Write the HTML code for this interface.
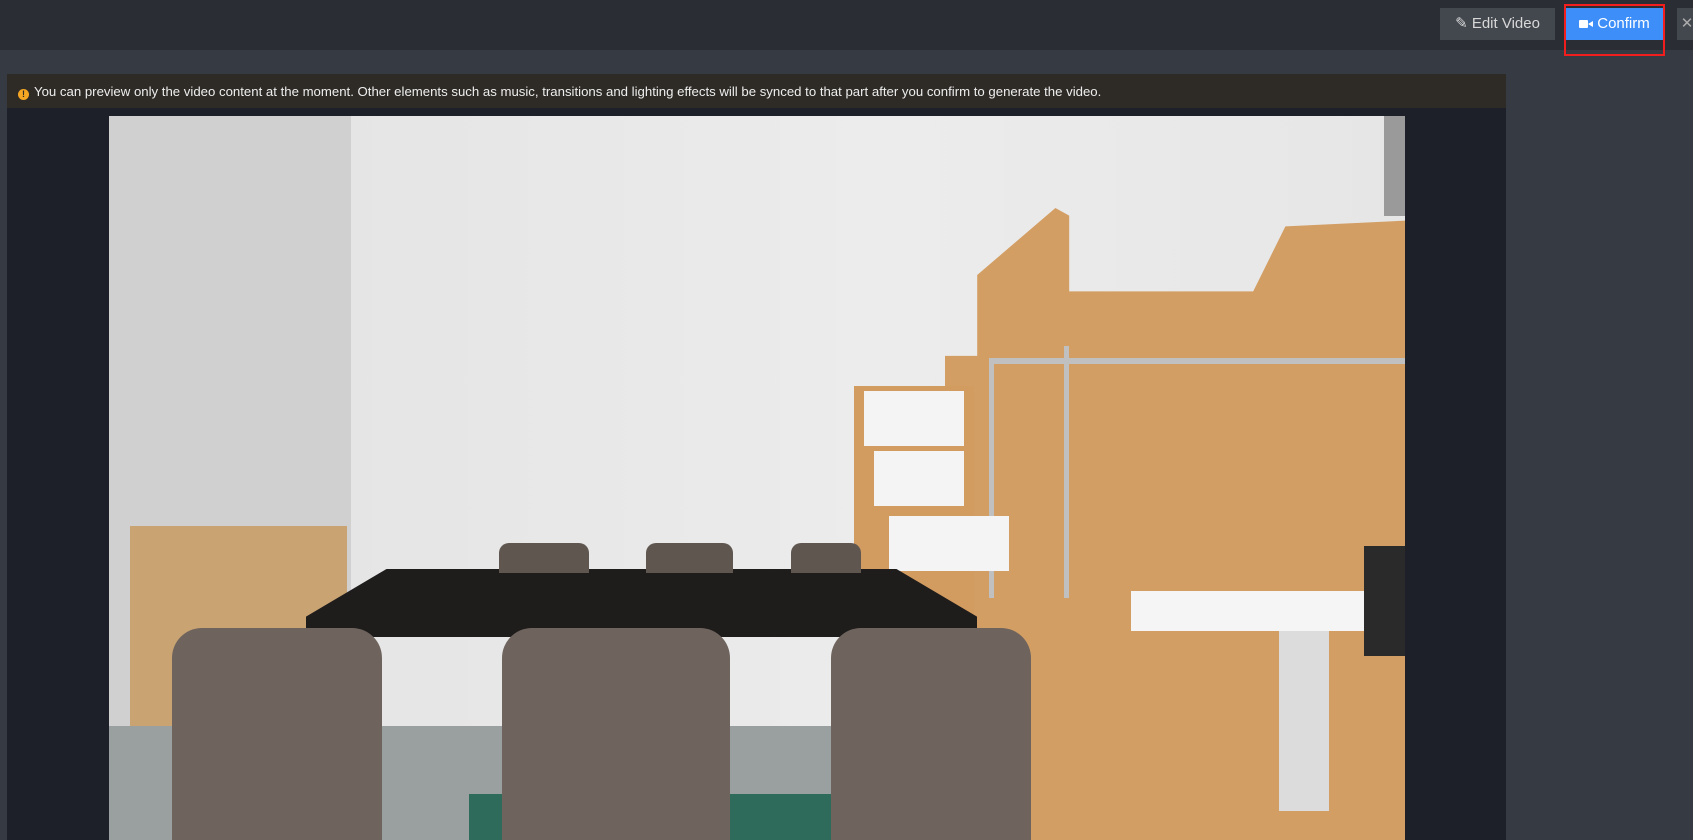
<!DOCTYPE html>
<html><head><meta charset="utf-8"><style>
*{margin:0;padding:0;box-sizing:border-box}
body{width:1693px;height:840px;background:#353a43;position:relative;overflow:hidden;font-family:"Liberation Sans",sans-serif}
.top{position:absolute;left:0;top:0;width:1693px;height:50px;background:#2a2d33}
.btn{position:absolute;top:8px;height:32px;color:#fff;font-size:15px;line-height:32px;text-align:center}
.a{position:absolute}
</style></head><body>
<div class="top"></div>
<div class="btn" style="left:1440px;width:115px;background:#43474e;color:#d8d8d8">✎ Edit Video</div>
<div class="btn" style="left:1566px;width:97px;background:#3d8ef8"><svg width="14" height="10" viewBox="0 0 14 10" style="vertical-align:-1px;margin-right:4px"><rect x="0" y="1" width="9" height="8" rx="1" fill="#fff"/><path d="M9 5l5-3v6z" fill="#fff"/></svg>Confirm</div>
<div class="a" style="left:1564px;top:4px;width:101px;height:52px;border:2px solid #f21d1d"></div>
<div class="btn" style="left:1677px;width:20px;background:#43474e;color:#aaa">✕</div>
<div class="a" style="left:7px;top:74px;width:1499px;height:766px;background:#1d2029"></div>
<div class="a" style="left:7px;top:74px;width:1499px;height:34px;background:#2e2b27;color:#eee;font-size:13.2px;line-height:36px;padding-left:11px;white-space:nowrap"><span style="display:inline-block;width:11px;height:11px;border-radius:50%;background:#f5a623;color:#2e2b27;font-size:9px;line-height:11px;text-align:center;font-weight:bold;margin-right:5px;vertical-align:-1px">!</span>You can preview only the video content at the moment. Other elements such as music, transitions and lighting effects will be synced to that part after you confirm to generate the video.</div>
<div class="a" style="left:109px;top:116px;width:1296px;height:724px;background:linear-gradient(90deg,#e2e2e2,#ececec 60%,#e6e6e6);overflow:hidden">
 <div class="a" style="left:0;top:0;width:242px;height:724px;background:#d0d0d0"></div>
 <div class="a" style="left:1275px;top:0;width:21px;height:100px;background:#9a9a9a"></div>
 <div class="a" style="left:21px;top:410px;width:217px;height:210px;background:#c9a472"></div>
 <div class="a" style="left:0;top:610px;width:1296px;height:114px;background:#9aa0a0"></div>
 <div class="a" style="left:360px;top:678px;width:936px;height:46px;background:#2e6b5a"></div>
 <div class="a" style="left:836px;top:92px;width:460px;height:632px;background:#d39e64;clip-path:polygon(0 23.4%,7% 23.4%,7% 10.6%,24% 0,27% 1.2%,27% 13.2%,67% 13.2%,74% 2.9%,100% 2%,100% 100%,0 100%)"></div>
 <div class="a" style="left:880px;top:242px;width:416px;height:6px;background:#c0c0c0"></div>
 <div class="a" style="left:880px;top:242px;width:5px;height:240px;background:#c0c0c0"></div>
 <div class="a" style="left:955px;top:230px;width:5px;height:252px;background:#c0c0c0"></div>
 <div class="a" style="left:745px;top:270px;width:120px;height:270px;background:#d29b60"></div>
 <div class="a" style="left:755px;top:275px;width:100px;height:55px;background:#f4f4f4"></div>
 <div class="a" style="left:765px;top:335px;width:90px;height:55px;background:#f4f4f4"></div>
 <div class="a" style="left:780px;top:400px;width:120px;height:55px;background:#f4f4f4"></div>
 <div class="a" style="left:1022px;top:475px;width:274px;height:40px;background:#f5f5f5"></div>
 <div class="a" style="left:1170px;top:515px;width:50px;height:180px;background:#dcdcdc"></div>
 <div class="a" style="left:1255px;top:430px;width:41px;height:110px;background:#2a2a2a"></div>
 <div class="a" style="left:197px;top:453px;width:671px;height:68px;background:#1f1c1c;clip-path:polygon(12% 0,88% 0,100% 70%,100% 100%,0 100%,0 70%)"></div>
 <div class="a" style="left:390px;top:427px;width:90px;height:30px;background:#5f5650;border-radius:10px 10px 0 0"></div>
 <div class="a" style="left:537px;top:427px;width:87px;height:30px;background:#5f5650;border-radius:10px 10px 0 0"></div>
 <div class="a" style="left:682px;top:427px;width:70px;height:30px;background:#5f5650;border-radius:10px 10px 0 0"></div>
 <div class="a" style="left:63px;top:512px;width:210px;height:212px;background:#6e645d;border-radius:30px 30px 0 0"></div>
 <div class="a" style="left:393px;top:512px;width:228px;height:212px;background:#6e645d;border-radius:30px 30px 0 0"></div>
 <div class="a" style="left:722px;top:512px;width:200px;height:212px;background:#6e645d;border-radius:30px 30px 0 0"></div>
</div>
</body></html>
